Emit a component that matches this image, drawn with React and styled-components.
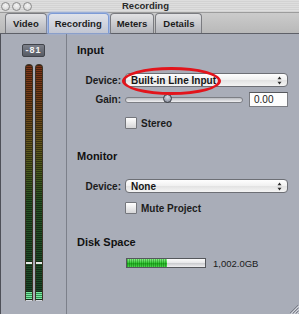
import React from 'react'
import styled, { createGlobalStyle } from 'styled-components'

const GlobalStyle = createGlobalStyle`
  html, body {
    margin: 0;
    padding: 0;
  }
  body {
    font-family: "Liberation Sans", Arial, sans-serif;
    background: #a9adb8;
  }
`

const Window = styled.div`
  position: relative;
  width: 299px;
  height: 314px;
  overflow: hidden;
  display: flex;
  flex-direction: column;
  background: #a9adb8;
`

const TitleBar = styled.div`
  flex: none;
  height: 12px;
  display: flex;
  align-items: center;
  background: repeating-linear-gradient(180deg, #dedede 0 1px, #d3d3d3 1px 2px);
  border-bottom: 1px solid #9c9c9c;
`

const Lights = styled.div`
  display: flex;
  gap: 2px;
  padding-left: 1px;
`

const Light = styled.span`
  width: 7px;
  height: 7px;
  border-radius: 50%;
  border: 1px solid #8a8a8a;
  background: radial-gradient(circle at 50% 35%, #f4f4f4, #cfcfcf);
`

const Title = styled.div`
  flex: 1;
  text-align: center;
  padding-right: 40px;
  font-size: 9.5px;
  font-weight: 700;
  color: #2a2a2a;
  line-height: 12px;
`

const TabStrip = styled.div`
  flex: none;
  height: 20px;
  display: flex;
  gap: 1px;
  padding-left: 5px;
  background: linear-gradient(180deg, #cbcbcb, #b9b9b9);
  border-bottom: 1px solid #5e6068;
`

const Tab = styled.div`
  height: 19px;
  padding: 0 ${p => p.$pad}px;
  display: flex;
  align-items: center;
  font-size: 9.5px;
  font-weight: 700;
  color: #1d1d1d;
  border: 1px solid ${p => (p.$active ? '#7d9bd6' : '#7a7b80')};
  border-bottom: none;
  border-radius: 4px 4px 0 0;
  background: ${p =>
    p.$active
      ? 'linear-gradient(180deg, #dfe2ea, #c2c6d2)'
      : 'linear-gradient(180deg, #e2e2e4, #b2b4ba)'};
  box-shadow: ${p => (p.$active ? '0 0 2px 1px #9bb6ee' : 'none')};
`

const Body = styled.div`
  flex: 1;
  display: flex;
  border-left: 1px solid #4e5058;
`

const MeterPanel = styled.div`
  width: 65px;
  flex: none;
  display: flex;
  flex-direction: column;
  align-items: center;
  border-right: 1px solid #7c808a;
`

const ClipButton = styled.div`
  margin-top: 10px;
  width: 21px;
  height: 11px;
  border: 1px solid #40434a;
  border-radius: 2px;
  background: linear-gradient(180deg, #7c808a, #565a63);
  color: #f4f4f4;
  font-size: 9px;
  font-weight: 700;
  line-height: 11px;
  text-align: center;
  letter-spacing: 1px;
`

const Meters = styled.div`
  margin-top: 7px;
  display: flex;
  gap: 2px;
  padding-left: 1px;
`

const MeterBar = styled.div`
  position: relative;
  width: 6px;
  height: 235px;
  border: 1px solid #3a3224;
  border-bottom-color: #d6d9e0;
  border-radius: 4px 4px 0 0;
  background:
    repeating-linear-gradient(180deg, rgba(0, 0, 0, 0.42) 0 1px, transparent 1px 2px),
    linear-gradient(
      180deg,
      #7c3518 0%,
      #713d17 14%,
      #62561d 34%,
      #48591e 46%,
      #285224 58%,
      #1b4829 100%
    );
`

const PeakMark = styled.span`
  position: absolute;
  left: 0;
  right: 0;
  height: 2px;
  background: #e4e8e4;
`

const LitSegments = styled.span`
  position: absolute;
  left: 0;
  right: 0;
  bottom: 1px;
  height: 7px;
  background: repeating-linear-gradient(180deg, #7de8a0 0 1px, #2f8f55 1px 2px);
`

const Content = styled.div`
  flex: 1;
  display: flex;
  flex-direction: column;
  padding: 9px 11px 0 10px;
`

const Heading = styled.h3`
  margin: ${p => p.$mt}px 0 0;
  font-size: 11px;
  font-weight: 700;
  line-height: 15px;
  color: #111;
`

const Row = styled.div`
  display: flex;
  align-items: center;
  gap: 4px;
  height: ${p => p.$h}px;
  margin-top: ${p => p.$mt}px;
`

const Label = styled.span`
  flex: none;
  width: 44px;
  text-align: right;
  font-size: 10px;
  font-weight: 700;
  color: #1c1c1c;
`

const Popup = styled.div`
  flex: 1;
  height: 12px;
  display: flex;
  align-items: center;
  justify-content: space-between;
  padding: 0 5px 0 5px;
  border: 1px solid #6d6f75;
  border-radius: 4px;
  background: linear-gradient(180deg, #fefefe 0%, #f0f0f0 50%, #e2e2e2 51%, #f4f4f4 100%);
  font-size: 10px;
  font-weight: 700;
  color: #161616;
`

const Slider = styled.div`
  position: relative;
  flex: 1;
  height: 4px;
  border: 1px solid #7c7e84;
  border-radius: 3px;
  background: linear-gradient(180deg, #b9bbc0, #f0f0f2);
`

const Thumb = styled.span`
  position: absolute;
  top: -4px;
  width: 7px;
  height: 7px;
  margin-left: -5px;
  border-radius: 50%;
  border: 1.5px solid #3a3d44;
  background: radial-gradient(circle at 50% 30%, #d8dce6, #7f8594);
`

const ValueBox = styled.div`
  flex: none;
  width: 33px;
  height: 13px;
  margin-left: 2px;
  padding-left: 4px;
  border: 1px solid #7a7c82;
  border-top-color: #55575c;
  background: #fdfdfd;
  font-size: 10px;
  line-height: 13px;
  color: #1a1a1a;
`

const Check = styled.span`
  flex: none;
  width: 10px;
  height: 10px;
  margin-left: 48px;
  border: 1px solid #74767c;
  border-radius: 1px;
  background: linear-gradient(180deg, #ffffff, #d6d6d8);
`

const CheckText = styled.span`
  font-size: 10px;
  font-weight: 700;
  color: #1c1c1c;
`

const DiskBar = styled.div`
  flex: none;
  width: 78px;
  height: 8px;
  margin-left: 49px;
  border: 1px solid #55575c;
  background: linear-gradient(180deg, #fbfbfb 0%, #e6e6e8 50%, #c9cacd 51%, #eeeef0 100%);
`

const DiskFill = styled.div`
  height: 100%;
  background:
    repeating-linear-gradient(90deg, rgba(0, 90, 0, 0.35) 0 1px, transparent 1px 2px),
    linear-gradient(180deg, #8af08a 0%, #3fcf3f 45%, #22b022 55%, #4cd64c 100%);
`

const DiskText = styled.span`
  margin-left: 3px;
  font-size: 9.5px;
  color: #1a1a1a;
`

const Callout = styled.span`
  position: absolute;
  left: 122px;
  top: 67px;
  width: 93px;
  height: 22px;
  border: 3px solid #e2141b;
  border-radius: 50%;
  pointer-events: none;
`

const Grip = styled.svg`
  position: absolute;
  right: 0;
  bottom: 0;
`

const Arrows = () => (
  <svg width="5" height="9" viewBox="0 0 5 9">
    <path d="M2.5 0.5 L4.5 3.2 L0.5 3.2 Z" fill="#2a2a2a" />
    <path d="M2.5 8.5 L4.5 5.8 L0.5 5.8 Z" fill="#2a2a2a" />
  </svg>
)

const tabs = [
  { name: 'Video', pad: 7 },
  { name: 'Recording', pad: 6, active: true },
  { name: 'Meters', pad: 6 },
  { name: 'Details', pad: 7 }
]

const channels = [{ peak: 36 }, { peak: 36 }]

export default function App() {
  const gain = 36
  const used = 51
  return (
    <>
      <GlobalStyle />
      <Window>
        <TitleBar>
          <Lights>
            <Light />
            <Light />
            <Light />
          </Lights>
          <Title>Recording</Title>
        </TitleBar>
        <TabStrip>
          {tabs.map(t => (
            <Tab key={t.name} $pad={t.pad} $active={t.active}>
              {t.name}
            </Tab>
          ))}
        </TabStrip>
        <Body>
          <MeterPanel>
            <ClipButton>-81</ClipButton>
            <Meters>
              {channels.map((c, i) => (
                <MeterBar key={i}>
                  <PeakMark style={{ bottom: c.peak }} />
                  <LitSegments />
                </MeterBar>
              ))}
            </Meters>
          </MeterPanel>
          <Content>
            <Heading $mt={0}>Input</Heading>
            <Row $h={14} $mt={15}>
              <Label>Device:</Label>
              <Popup>
                Built-in Line Input
                <Arrows />
              </Popup>
            </Row>
            <Row $h={15} $mt={5}>
              <Label>Gain:</Label>
              <Slider>
                <Thumb style={{ left: `${gain}%` }} />
              </Slider>
              <ValueBox>0.00</ValueBox>
            </Row>
            <Row $h={12} $mt={10}>
              <Check />
              <CheckText>Stereo</CheckText>
            </Row>

            <Heading $mt={20}>Monitor</Heading>
            <Row $h={14} $mt={15}>
              <Label>Device:</Label>
              <Popup>
                None
                <Arrows />
              </Popup>
            </Row>
            <Row $h={12} $mt={9}>
              <Check />
              <CheckText>Mute Project</CheckText>
            </Row>

            <Heading $mt={21}>Disk Space</Heading>
            <Row $h={10} $mt={8}>
              <DiskBar>
                <DiskFill style={{ width: `${used}%` }} />
              </DiskBar>
              <DiskText>1,002.0GB</DiskText>
            </Row>
          </Content>
        </Body>
        <Callout />
        <Grip width="12" height="12" viewBox="0 0 12 12">
          <path d="M11 3 L3 11 M11 6 L6 11 M11 9 L9 11" stroke="#7d808a" strokeWidth="1" />
          <path d="M12 4 L4 12 M12 7 L7 12 M12 10 L10 12" stroke="#d6d8de" strokeWidth="1" />
        </Grip>
      </Window>
    </>
  )
}
